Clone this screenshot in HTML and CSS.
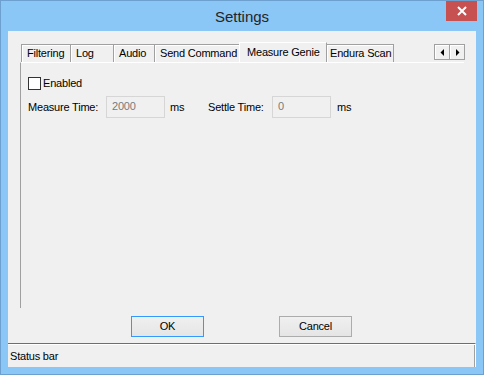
FILE: index.html
```html
<!DOCTYPE html>
<html lang="en">
<head>
    <meta charset="UTF-8">
    <title>Settings</title>
    <link rel="stylesheet" href="styles.css">
</head>
<body>
    <div class="window">
        <div class="titlebar">
            <div></div>
            <div class="title">Settings</div>
            <div class="close">
                <svg width="10" height="10" viewBox="0 0 10 10">
                    <path d="M1 1 L9 9 M9 1 L1 9" stroke="#fff" stroke-width="2"/>
                </svg>
            </div>
        </div>

        <div class="client">
            <div class="tabs">
                <div class="tab" style="width:50px">Filtering</div>
                <div class="tab" style="width:44px">Log</div>
                <div class="tab" style="width:42px">Audio</div>
                <div class="tab" style="width:86px">Send Command</div>
                <div class="tab active" style="width:88px">Measure Genie</div>
                <div class="tab tight" style="width:68px">Endura Scan</div>
                <div class="spacer"></div>
                <div class="arrows">
                    <div class="arrow">
                        <svg width="5" height="7" viewBox="0 0 5 7"><path d="M4 0 L4 7 L0.5 3.5 Z" fill="#000"/></svg>
                    </div>
                    <div class="arrow">
                        <svg width="5" height="7" viewBox="0 0 5 7"><path d="M1 0 L1 7 L4.5 3.5 Z" fill="#000"/></svg>
                    </div>
                </div>
            </div>

            <div class="pane">
                <div class="check-row">
                    <span class="checkbox"></span>
                    <span>Enabled</span>
                </div>
                <div class="field-row">
                    <span class="label measure">Measure Time:</span>
                    <div class="input">2000</div>
                    <span class="unit first">ms</span>
                    <span class="label settle">Settle Time:</span>
                    <div class="input">0</div>
                    <span class="unit">ms</span>
                </div>
            </div>

            <div class="buttons">
                <div class="btn default">OK</div>
                <div class="btn">Cancel</div>
            </div>

            <div class="statusbar">Status bar</div>
        </div>
    </div>
</body>
</html>
```

FILE: styles.css
```css
html, body {
    margin: 0;
    padding: 0;
}
body {
    width: 484px;
    height: 375px;
    overflow: hidden;
    font-family: "Liberation Sans", Arial, sans-serif;
    font-size: 11px;
    letter-spacing: -0.2px;
    color: #000;
}
.window {
    box-sizing: border-box;
    width: 484px;
    height: 375px;
    background: #8ac6f6;
    border: 1px solid #6d9fcf;
    padding: 0 7px 7px 7px;
    display: flex;
    flex-direction: column;
}
.titlebar {
    height: 30px;
    margin: 0 -7px;
    display: grid;
    grid-template-columns: 1fr auto 1fr;
}
.title {
    font-size: 15px;
    letter-spacing: 0;
    line-height: 31px;
    color: #252525;
}
.close {
    justify-self: end;
    width: 31px;
    height: 20px;
    margin-right: 6px;
    background: #c75050;
    display: flex;
    align-items: center;
    justify-content: center;
}
.client {
    height: 336px;
    background: #f0f0f0;
    display: flex;
    flex-direction: column;
}
.tabs {
    height: 20px;
    margin: 11px 11px 0 13px;
    display: flex;
    align-items: flex-end;
}
.tab {
    box-sizing: border-box;
    height: 18px;
    margin-right: -1px;
    padding-left: 5px;
    border: 1px solid #a0a0a0;
    border-bottom: none;
    box-shadow: inset 1px 1px 0 #fff;
    line-height: 17px;
    white-space: nowrap;
    overflow: hidden;
}
.tab.tight {
    padding-left: 3px;
}
.tab.active {
    height: 20px;
    padding-left: 7px;
    line-height: 18px;
    border-color: #fff;
    border-right-color: #a0a0a0;
    box-shadow: none;
    position: relative;
    z-index: 1;
}
.spacer {
    flex: 1;
}
.arrows {
    align-self: flex-start;
    margin-top: 2px;
    display: flex;
}
.arrow {
    box-sizing: border-box;
    width: 16px;
    height: 16px;
    margin-left: -1px;
    border: 1px solid #a0a0a0;
    box-shadow: inset 1px 1px 0 #fff;
    display: flex;
    align-items: center;
    justify-content: center;
}
.pane {
    box-sizing: border-box;
    height: 246px;
    margin: 0 12px;
    padding: 14px 0 0 7px;
    border-left: 1px solid #a0a0a0;
    border-top: 1px solid #fff;
}
.check-row {
    height: 13px;
    display: flex;
    align-items: center;
    line-height: 13px;
}
.checkbox {
    box-sizing: border-box;
    width: 13px;
    height: 13px;
    border: 1px solid #333;
    background: #fff;
    margin-right: 2px;
}
.field-row {
    margin-top: 6px;
    height: 22px;
    display: flex;
    align-items: center;
}
.label.measure {
    width: 78px;
}
.label.settle {
    width: 64px;
}
.input {
    box-sizing: border-box;
    width: 59px;
    height: 22px;
    border: 1px solid #d6d6d6;
    padding: 1px 0 0 5px;
    color: #7a7a7a;
    line-height: 16px;
}
.unit {
    margin-left: 6px;
}
.unit.first {
    width: 38px;
    margin-left: 5px;
}
.buttons {
    margin-top: 8px;
    padding-left: 123px;
    display: flex;
    gap: 75px;
}
.btn {
    box-sizing: border-box;
    width: 73px;
    height: 21px;
    border: 1px solid #acacac;
    background: linear-gradient(#f0f0f0, #e5e5e5);
    text-align: center;
    line-height: 19px;
}
.btn.default {
    border-color: #3399ff;
}
.statusbar {
    box-sizing: border-box;
    height: 24px;
    margin-top: 6px;
    padding-left: 2px;
    border-top: 1px solid #6e6e6e;
    border-right: 1px solid #fff;
    box-shadow: inset 0 1px 0 #fff, inset -1px 0 0 #a0a0a0;
    line-height: 24px;
}
```
